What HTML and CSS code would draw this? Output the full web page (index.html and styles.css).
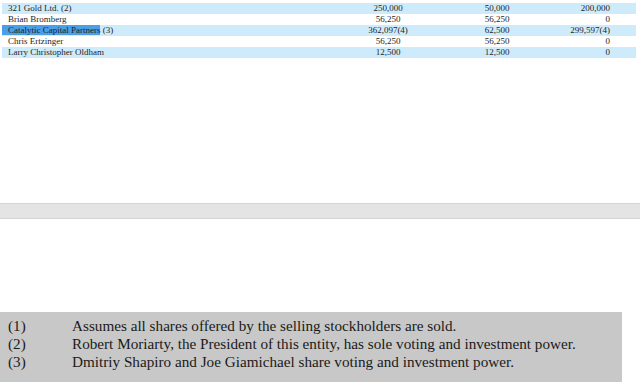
FILE: index.html
```html
<!DOCTYPE html>
<html lang="en">
<head>
<meta charset="utf-8">
<title>Selling Stockholders</title>
<link rel="stylesheet" href="styles.css">
</head>
<body>
<div class="holders">
  <div class="row alt">
    <div class="name">321 Gold Ltd. (2)</div>
    <div class="num">250,000</div>
    <div class="num">50,000</div>
    <div class="after">200,000</div>
  </div>
  <div class="row">
    <div class="name">Brian Bromberg</div>
    <div class="num">56,250</div>
    <div class="num">56,250</div>
    <div class="after">0</div>
  </div>
  <div class="row alt">
    <div class="name"><span class="sel">Catalytic Capital Partners</span> (3)</div>
    <div class="num">362,097(4)</div>
    <div class="num">62,500</div>
    <div class="after">299,597(4)</div>
  </div>
  <div class="row">
    <div class="name">Chris Ertzinger</div>
    <div class="num">56,250</div>
    <div class="num">56,250</div>
    <div class="after">0</div>
  </div>
  <div class="row alt">
    <div class="name">Larry Christopher Oldham</div>
    <div class="num">12,500</div>
    <div class="num">12,500</div>
    <div class="after">0</div>
  </div>
</div>

<div class="divider"></div>

<div class="notes">
  <div class="note"><span class="mark">(1)</span><span class="text">Assumes all shares offered by the selling stockholders are sold.</span></div>
  <div class="note"><span class="mark">(2)</span><span class="text">Robert Moriarty, the President of this entity, has sole voting and investment power.</span></div>
  <div class="note"><span class="mark">(3)</span><span class="text">Dmitriy Shapiro and Joe Giamichael share voting and investment power.</span></div>
</div>
</body>
</html>
```
FILE: styles.css
```css
html, body {
  margin: 0;
  padding: 0;
  background: #ffffff;
}

body {
  font-family: "Liberation Serif", "Times New Roman", serif;
  color: #1e1e1e;
  width: 640px;
  height: 382px;
  overflow: hidden;
}

.holders {
  margin: 3px 4px 0 2px;
  font-size: 9px;
}

.row {
  display: grid;
  grid-template-columns: 333px 106px 112px 1fr;
  height: 11px;
  line-height: 11px;
}

.row.alt {
  background: #ceebfb;
}

.name {
  padding-left: 6px;
  white-space: nowrap;
}

.sel {
  background: #4a9fe6;
  margin-left: -6px;
  padding-left: 6px;
}

.num {
  text-align: center;
}

.after {
  text-align: right;
  padding-right: 26px;
}

.divider {
  margin-top: 145px;
  height: 14px;
  background: #e4e4e4;
  border-top: 1px solid #d5d5d5;
  border-bottom: 1px solid #d5d5d5;
}

.notes {
  margin-top: 93px;
  width: 614px;
  height: 70px;
  padding: 5px 0 0 8px;
  background: #c8c8c8;
  font-size: 15.2px;
  line-height: 18px;
  color: #1a1a1a;
}

.note {
  display: flex;
}

.mark {
  width: 64px;
  flex: none;
}
```
